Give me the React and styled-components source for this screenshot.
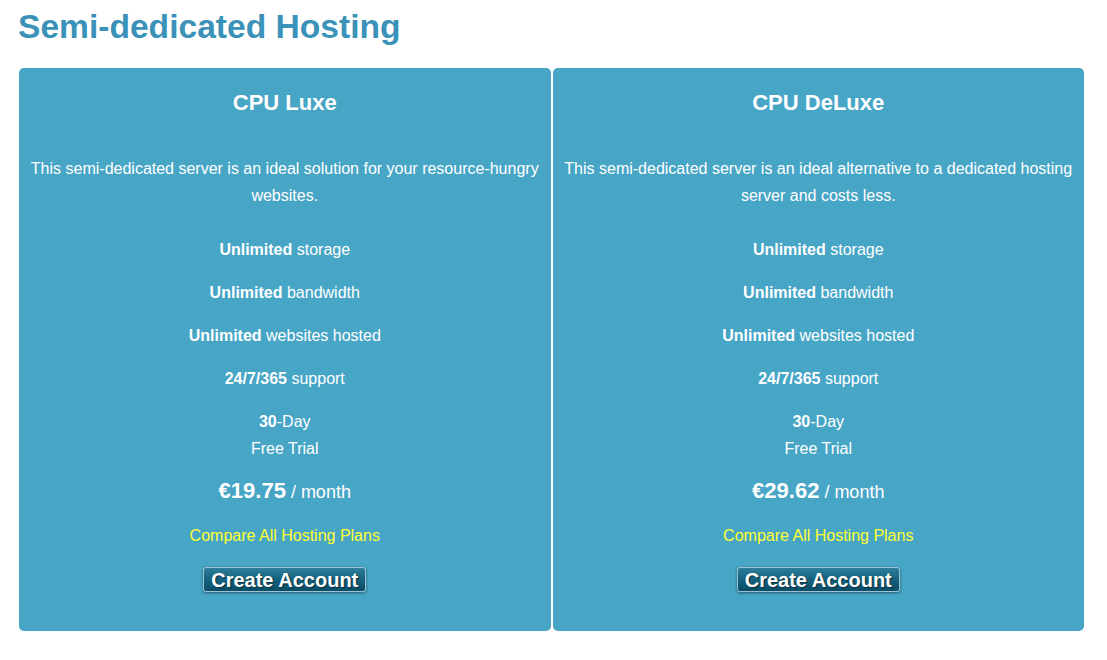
import React from 'react';
import styled, { createGlobalStyle } from 'styled-components';

const GlobalStyle = createGlobalStyle`
  body {
    margin: 0;
    background: #ffffff;
    font-family: "Liberation Sans", Arial, sans-serif;
  }
`;

const Page = styled.div`
  padding: 0 23px 0 19px;
`;

const Heading = styled.h1`
  margin: 7px 0 22px -1px;
  font-size: 33.6px;
  line-height: 39px;
  font-weight: 700;
  color: #3b92b8;
`;

const Plans = styled.div`
  display: grid;
  grid-template-columns: 1fr 1fr;
  gap: 2px;
`;

const Card = styled.div`
  display: flex;
  flex-direction: column;
  align-items: center;
  text-align: center;
  padding: 22px 8px 39px;
  background: #47a5c6;
  border-radius: 5px;
  color: #ffffff;
`;

const PlanName = styled.h2`
  margin: 0 0 39px;
  font-size: 22px;
  line-height: 26px;
  font-weight: 700;
`;

const Description = styled.p`
  margin: 0 0 27px;
  font-size: 16px;
  line-height: 27px;
`;

const Feature = styled.p`
  margin: 0 0 16px;
  font-size: 16px;
  line-height: 27px;

  b {
    font-weight: 700;
  }
`;

const Price = styled.p`
  margin: 0 0 17px;
  font-size: 18px;
  line-height: 26px;

  b {
    font-size: 22px;
    font-weight: 700;
  }
`;

const CompareLink = styled.a`
  display: block;
  margin: 0 0 18px;
  font-size: 16px;
  line-height: 27px;
  color: #ffff33;
  text-decoration: none;
`;

const CreateButton = styled.button`
  height: 25px;
  padding: 0 7px;
  font-family: "Liberation Sans", Arial, sans-serif;
  font-size: 20px;
  font-weight: 700;
  line-height: 22px;
  color: #ffffff;
  text-shadow: 1px 1px 1px #0a2f3f;
  background: linear-gradient(to bottom, #2d7f9b 0%, #15617d 50%, #0b4c66 100%);
  border: 1px solid #9cc3d3;
  border-radius: 3px;
  box-shadow: 0 1px 3px rgba(0, 0, 0, 0.45);
  cursor: pointer;
`;

const plans = [
  {
    name: 'CPU Luxe',
    text: 'This semi-dedicated server is an ideal solution for your resource-hungry websites.',
    price: '€19.75',
  },
  {
    name: 'CPU DeLuxe',
    text: 'This semi-dedicated server is an ideal alternative to a dedicated hosting server and costs less.',
    price: '€29.62',
  },
];

const PlanCard = ({ plan }) => (
  <Card>
    <PlanName>{plan.name}</PlanName>
    <Description>{plan.text}</Description>
    <Feature><b>Unlimited</b> storage</Feature>
    <Feature><b>Unlimited</b> bandwidth</Feature>
    <Feature><b>Unlimited</b> websites hosted</Feature>
    <Feature><b>24/7/365</b> support</Feature>
    <Feature><b>30</b>-Day<br />Free Trial</Feature>
    <Price><b>{plan.price}</b> / month</Price>
    <CompareLink href="#">Compare All Hosting Plans</CompareLink>
    <CreateButton>Create Account</CreateButton>
  </Card>
);

const App = () => (
  <Page>
    <GlobalStyle />
    <Heading>Semi-dedicated Hosting</Heading>
    <Plans>
      {plans.map(plan => (
        <PlanCard key={plan.name} plan={plan} />
      ))}
    </Plans>
  </Page>
);

export default App;
